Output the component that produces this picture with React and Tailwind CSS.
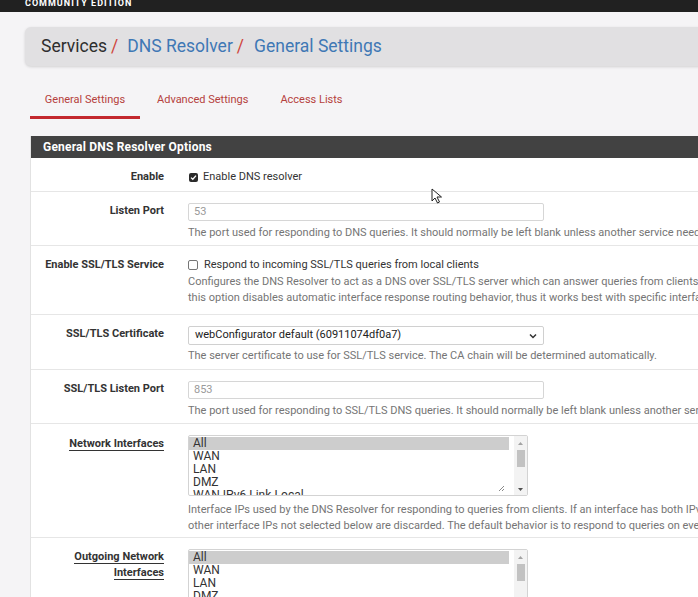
import React from "react";

const LABEL = "w-[145px] shrink-0 pr-[12px] text-right font-bold text-[11px] leading-[14px] text-[#333]";
const HELP = "whitespace-nowrap text-[11px] text-[#757575]";
const INPUT =
  "w-[356px] h-[18px] border border-[#d6d6d6] rounded-[2px] bg-white px-[5px] text-[11px] leading-[16px] text-[#9a9a9a]";

function Row({ label, height, underline, children }) {
  return (
    <div className={`flex border-b border-[#e6e6e6] ${height}`}>
      <div className={`${LABEL} pt-[12px]`}>
        {underline ? (
          <span className="border-b border-[#333] leading-[16px]">{label}</span>
        ) : (
          label
        )}
      </div>
      <div className="flex-1 pl-[12px] pt-[11px] min-w-0">{children}</div>
    </div>
  );
}

function ListBox({ items }) {
  return (
    <div className="relative w-[340px] h-[61px] border border-[#d3d3d3] rounded-[2px] bg-white overflow-hidden">
      <div className="pt-[1px] text-[12px] leading-[13px] text-[#333]">
        {items.map((it, i) => (
          <div
            key={it}
            className={`w-[320px] pl-[4px] h-[13px] ${i === 0 ? "bg-[#cdcdcd]" : ""}`}
          >
            {it}
          </div>
        ))}
      </div>
      {/* fake scrollbar */}
      <div className="absolute right-0 top-0 w-[13px] h-full bg-[#f3f3f3] flex flex-col items-center">
        <svg width="7" height="10" viewBox="0 0 7 10" className="mt-[3px]">
          <path d="M1 6 L3.5 3 L6 6 Z" fill="#a3a3a3" />
        </svg>
        <div className="w-[8px] h-[17px] bg-[#c2c2c2] mt-[1px]" />
        <div className="flex-1" />
        <svg width="7" height="10" viewBox="0 0 7 10" className="mb-[1px]">
          <path d="M1 4 L3.5 7 L6 4 Z" fill="#505050" />
        </svg>
      </div>
      <svg
        width="7"
        height="7"
        viewBox="0 0 7 7"
        className="absolute right-[22px] bottom-[3px]"
      >
        <path d="M6 1 L1 6 M6 4 L4 6" stroke="#8a8a8a" strokeWidth="1" />
      </svg>
    </div>
  );
}

export default function App() {
  const ifaces = ["All", "WAN", "LAN", "DMZ", "WAN IPv6 Link-Local"];
  return (
    <div
      className="relative w-[698px] h-[597px] overflow-hidden bg-[#f5f4f6]"
      style={{ fontFamily: "Roboto, 'Liberation Sans', sans-serif" }}
    >
      {/* top bar */}
      <div className="h-[12px] bg-[#212121] pl-[25px] overflow-hidden">
        <div className="text-[9px] font-bold tracking-[1px] text-white leading-[9px] -mt-[1px]">
          COMMUNITY EDITION
        </div>
      </div>

      {/* breadcrumb */}
      <div className="ml-[25px] mt-[15px] w-[700px] h-[39px] rounded-[6px] bg-[#e1e0e2] shadow-[0_1px_3px_rgba(0,0,0,0.15)] flex items-center pl-[16px] text-[17.5px]">
        <span className="text-[#2e2e2e]">Services</span>
        <span className="text-[#d0453c] ml-[4px]">/</span>
        <span className="text-[#3f78b5] ml-[9px]">DNS Resolver</span>
        <span className="text-[#d0453c] ml-[4px]">/</span>
        <span className="text-[#3f78b5] ml-[10px]">General Settings</span>
      </div>

      {/* tabs */}
      <div className="ml-[30px] mt-[26px] flex text-[11px] h-[27px]">
        <div className="w-[110px] text-center text-[#b5413d] border-b-[3px] border-[#c3282e] leading-[14px] pt-[1px]">
          General Settings
        </div>
        <div className="ml-[17px] text-[#b5413d] leading-[14px] pt-[1px]">Advanced Settings</div>
        <div className="ml-[32px] text-[#b5413d] leading-[14px] pt-[1px]">Access Lists</div>
      </div>

      {/* panel */}
      <div className="ml-[30px] mt-[17px] w-[700px] bg-white border-l border-[#e2e2e2]">
        <div className="h-[22px] bg-[#424242] pl-[12px] flex items-center text-white font-bold text-[12px] tracking-[0.2px]">
          General DNS Resolver Options
        </div>

        <Row label="Enable" height="h-[34px]">
          <div className="flex items-center h-[14px] mt-[1px] text-[11px] text-[#333]">
            <span className="w-[9px] h-[9px] rounded-[2px] bg-[#2a2a2a] ml-[1px] mr-[5px] flex items-center justify-center">
              <svg width="7" height="7" viewBox="0 0 7 7">
                <path d="M1 3.6 L2.8 5.3 L6 1.6" stroke="#fff" strokeWidth="1.3" fill="none" />
              </svg>
            </span>
            Enable DNS resolver
          </div>
        </Row>

        <Row label="Listen Port" height="h-[54px]">
          <div className={INPUT}>53</div>
          <div className={`${HELP} mt-[5px] leading-[14px]`}>
            The port used for responding to DNS queries. It should normally be left blank unless another service needs to bind to TCP/UDP port 53.
          </div>
        </Row>

        <Row label="Enable SSL/TLS Service" height="h-[69px]">
          <div className="flex items-center h-[14px] mt-[1px] text-[11px] text-[#333]">
            <span className="w-[10px] h-[10px] rounded-[2px] border border-[#767676] bg-white mr-[6px]" />
            Respond to incoming SSL/TLS queries from local clients
          </div>
          <div className={`${HELP} mt-[2px] leading-[16px]`}>
            Configures the DNS Resolver to act as a DNS over SSL/TLS server which can answer queries from clients which also support DNS over TLS. Activating
          </div>
          <div className={`${HELP} leading-[16px]`}>
            this option disables automatic interface response routing behavior, thus it works best with specific interface bindings.
          </div>
        </Row>

        <Row label="SSL/TLS Certificate" height="h-[55px]">
          <div className="w-[356px] h-[19px] border border-[#d0d0d0] rounded-[2px] bg-white pl-[6px] pr-[6px] flex items-center justify-between text-[11px] text-[#222]">
            <span>webConfigurator default (60911074df0a7)</span>
            <svg width="8" height="6" viewBox="0 0 8 6">
              <path d="M1 1.5 L4 4.5 L7 1.5" stroke="#333" strokeWidth="1.5" fill="none" />
            </svg>
          </div>
          <div className={`${HELP} mt-[4px] leading-[14px]`}>
            The server certificate to use for SSL/TLS service. The CA chain will be determined automatically.
          </div>
        </Row>

        <Row label="SSL/TLS Listen Port" height="h-[54px]">
          <div className={INPUT}>853</div>
          <div className={`${HELP} mt-[5px] leading-[14px]`}>
            The port used for responding to SSL/TLS DNS queries. It should normally be left blank unless another service needs to bind to TCP/UDP port 853.
          </div>
        </Row>

        <Row label="Network Interfaces" height="h-[114px]" underline>
          <ListBox items={ifaces} />
          <div className={`${HELP} mt-[6px] leading-[16px]`}>
            Interface IPs used by the DNS Resolver for responding to queries from clients. If an interface has both IPv4 and IPv6 IPs, both are used. Queries to
          </div>
          <div className={`${HELP} leading-[16px]`}>
            other interface IPs not selected below are discarded. The default behavior is to respond to queries on every available IPv4 and IPv6 address.
          </div>
        </Row>

        <div className="flex h-[80px]">
          <div className={`${LABEL} pt-[11px] leading-[16px]`}>
            <span className="border-b border-[#333]">Outgoing Network</span>
            <br />
            <span className="border-b border-[#333]">Interfaces</span>
          </div>
          <div className="flex-1 pl-[12px] pt-[11px]">
            <ListBox items={ifaces} />
          </div>
        </div>
      </div>

      {/* mouse pointer */}
      <svg
        width="12"
        height="17"
        viewBox="0 0 12 17"
        className="absolute left-[431px] top-[188px]"
      >
        <path
          d="M1 1 L1 13 L4 10 L6.5 15 L8.5 14 L6 9 L10.5 9 Z"
          fill="#fff"
          stroke="#222"
          strokeWidth="1"
          strokeLinejoin="round"
        />
      </svg>
    </div>
  );
}
